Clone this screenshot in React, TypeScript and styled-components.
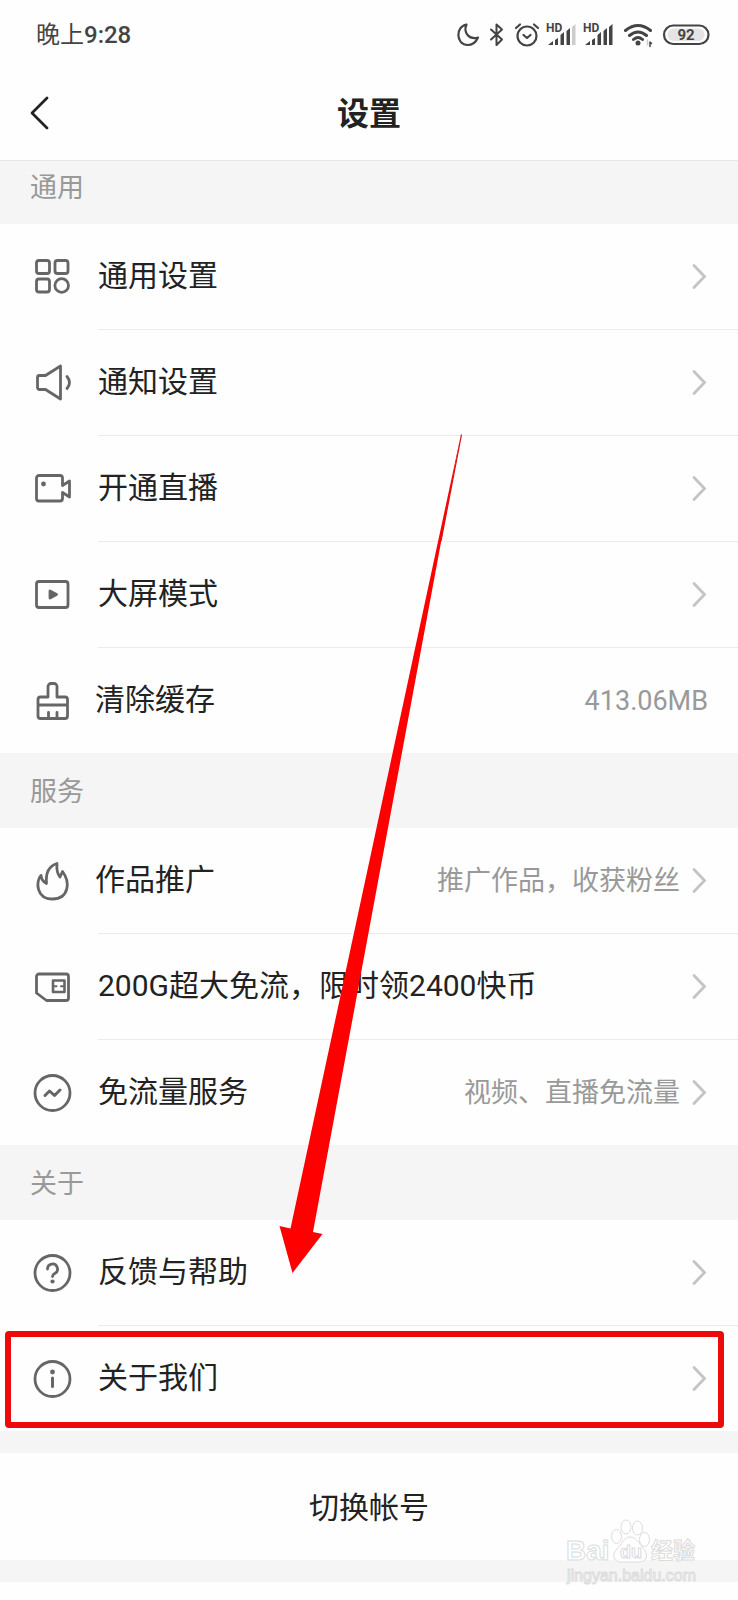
import React from "react";
import styled, { createGlobalStyle } from "styled-components";

const GlobalStyle = createGlobalStyle`
  * { box-sizing: border-box; }
  body {
    margin: 0;
    background: #fefefe;
    color: #222;
    font-family: Roboto, "Noto Sans CJK SC", sans-serif;
  }
  button { font: inherit; color: inherit; background: none; border: 0; padding: 0; cursor: pointer; }
  svg { display: block; flex: none; }
`;

const Page = styled.div`
  position: relative;
  overflow: hidden;
  min-height: 100vh;
`;

const StatusBar = styled.div`
  display: flex;
  align-items: center;
  justify-content: space-between;
  height: 72px;
  padding: 0 28px 2px 36px;
  color: #444;
  font-size: 24px;
  line-height: 32px;
  font-weight: 500;
`;

const DayPart = styled.span`
  font-weight: 400;
`;

const TitleBar = styled.header`
  display: grid;
  grid-template-columns: 48px 1fr 48px;
  align-items: center;
  height: 89px;
  padding: 0 24px 6px;
  border-bottom: 1px solid #e6e6e6;
`;

const BackButton = styled.button`
  display: flex;
  align-items: center;
  height: 48px;
`;

const Title = styled.h1`
  margin: 0;
  padding-top: 2px;
  text-align: center;
  font-size: 32px;
  line-height: 40px;
  font-weight: 700;
`;

const SectionTitle = styled.h2<{ $compact?: boolean }>`
  margin: 0;
  height: ${(p) => (p.$compact ? 63 : 75)}px;
  padding: ${(p) => (p.$compact ? 9 : 21)}px 30px 0;
  background: #f5f5f5;
  color: #999;
  font-size: 27px;
  line-height: 36px;
  font-weight: 400;
`;

const List = styled.ul`
  margin: 0;
  padding: 0;
  list-style: none;
`;

const Item = styled.li<{ $marked?: boolean }>`
  position: relative;
  ${(p) =>
    p.$marked &&
    `&::after {
      content: "";
      position: absolute;
      inset: 5px 14px 3px 5px;
      border: 6px solid #ee0a0a;
      border-radius: 4px;
      pointer-events: none;
    }`}
`;

const RowButton = styled.button<{ $last: boolean }>`
  display: flex;
  width: 100%;
  height: ${(p) => (p.$last ? 105 : 106)}px;
  padding-left: 32px;
  text-align: left;
`;

const RowIcon = styled.span`
  display: flex;
  align-items: center;
  width: 40px;
`;

const RowBody = styled.span<{ $last: boolean; $tight: boolean }>`
  display: flex;
  flex: 1;
  align-items: center;
  margin-left: 26px;
  padding-right: 30px;
  border-bottom: ${(p) => (p.$last ? 0 : 1)}px solid #ebebeb;
  text-indent: ${(p) => (p.$tight ? -3 : 0)}px;
`;

const Label = styled.span`
  flex: 1;
  font-size: 30px;
  line-height: 40px;
  padding-bottom: 2px;
  white-space: nowrap;
`;

const Value = styled.span`
  color: #999;
  font-size: 27px;
  line-height: 40px;
  white-space: nowrap;
  text-indent: 0;
`;

const Chevron = styled.svg`
  margin-left: 12px;
`;

const Gap = styled.div`
  height: 22px;
  background: #f5f5f5;
`;

const SwitchButton = styled.button`
  display: block;
  width: 100%;
  height: 107px;
  padding-bottom: 4px;
  font-size: 30px;
`;

const ArrowMark = styled.svg`
  position: absolute;
  top: 434px;
  left: 278px;
  pointer-events: none;
`;

const Watermark = styled.div`
  position: absolute;
  top: 1519px;
  right: 34px;
  width: 140px;
  pointer-events: none;
`;

const line = {
  fill: "none",
  stroke: "#666",
  strokeWidth: 2.8,
  strokeLinecap: "round" as const,
  strokeLinejoin: "round" as const,
};

const Icon = ({ children }: { children: React.ReactNode }) => (
  <svg width="40" height="40" viewBox="0 0 40 40" aria-hidden="true" {...line}>
    {children}
  </svg>
);

const icons = {
  grid: (
    <Icon>
      <rect x="4.5" y="3.500" width="13" height="13" rx="2.5" />
      <rect x="23" y="3.500" width="13" height="13" rx="2.5" />
      <rect x="4.5" y="22" width="13" height="13" rx="2.5" />
      <circle cx="29.700" cy="28.500" r="6.8" />
    </Icon>
  ),
  sound: (
    <Icon>
      <path d="M7.500 12.500H13.500L28.500 3v33L13.500 26.500H7.500a2 2 0 0 1-2-2v-10a2 2 0 0 1 2-2z" />
      <path d="M35 13.500q5 6 0 12" />
    </Icon>
  ),
  camera: (
    <Icon>
      <path d="M30.500 16.500l7-4.500v16L30.500 23.500v6a2.500 2.500 0 0 1-2.500 2.500H7A2.500 2.500 0 0 1 4.500 29.500V9A2.500 2.500 0 0 1 7 6.500h21A2.500 2.500 0 0 1 30.500 9z" />
      <circle cx="11.500" cy="15" r="2.400" fill="#666" stroke="none" />
    </Icon>
  ),
  play: (
    <Icon>
      <rect x="4.500" y="6.500" width="31.500" height="26" rx="2.500" />
      <path d="M18 16v7l6.500-3.500z" fill="#666" />
    </Icon>
  ),
  brush: (
    <Icon>
      <path d="M16 16V5.500a3 3 0 0 1 3-3h3a3 3 0 0 1 3 3V16h8a2.500 2.500 0 0 1 2.500 2.500V35a2.500 2.500 0 0 1-2.500 2.500H8.500A2.500 2.500 0 0 1 6 35V18.500A2.500 2.500 0 0 1 8.500 16zM6 24h29.500M16.500 31.500V37M25 31.500V37" />
    </Icon>
  ),
  flame: (
    <Icon>
      <path d="M9 14.500C3.500 20 4 38 20.500 38C37 38 38.500 21 30.500 10.500L28 16C25 12.500 24.500 8 25 2.500C17 5 13.500 12 14.500 22.500C11.500 21 9.500 18.500 9 14.500z" />
    </Icon>
  ),
  sim: (
    <Icon>
      <path d="M7 7h27a2.500 2.500 0 0 1 2.500 2.500V31a2.500 2.500 0 0 1-2.500 2.500H14.500L4.500 26V9.500A2.500 2.500 0 0 1 7 7z" />
      <path d="M21 13.500h11.500v11.500H21z" strokeWidth="2.600" />
      <path d="M22.500 19.300h2M29 19.300h2" strokeWidth="2" />
    </Icon>
  ),
  pulse: (
    <Icon>
      <circle cx="20.500" cy="20" r="17.500" />
      <path d="M13 22.500l4.500-4.500 5 4.500 5.500-5.500" strokeWidth="3" />
    </Icon>
  ),
  help: (
    <Icon>
      <circle cx="20.500" cy="20" r="17.500" />
      <path d="M15.500 16a5 5 0 1 1 7.500 4.300q-2.500 1.500-2.500 3.200" />
      <circle cx="20.500" cy="28.500" r="2.100" fill="#666" stroke="none" />
    </Icon>
  ),
  info: (
    <Icon>
      <circle cx="20.500" cy="20" r="17.500" />
      <path d="M20.500 19v8.500" strokeWidth="3" />
      <circle cx="20.500" cy="13" r="2.400" fill="#666" stroke="none" />
    </Icon>
  ),
};

type Row = { icon: keyof typeof icons; label: string; value?: string; arrow?: boolean; tight?: boolean; marked?: boolean };

const sections: { title: string; rows: Row[] }[] = [
  {
    title: "通用",
    rows: [
      { icon: "grid", label: "通用设置" },
      { icon: "sound", label: "通知设置" },
      { icon: "camera", label: "开通直播" },
      { icon: "play", label: "大屏模式" },
      { icon: "brush", label: "清除缓存", value: "413.06MB", arrow: false, tight: true },
    ],
  },
  {
    title: "服务",
    rows: [
      { icon: "flame", label: "作品推广", value: "推广作品，收获粉丝", tight: true },
      { icon: "sim", label: "200G超大免流，限时领2400快币" },
      { icon: "pulse", label: "免流量服务", value: "视频、直播免流量" },
    ],
  },
  {
    title: "关于",
    rows: [
      { icon: "help", label: "反馈与帮助" },
      { icon: "info", label: "关于我们", marked: true },
    ],
  },
];

const StatusGlyphs = () => (
  <svg width="262" height="28" viewBox="448 21 262 28" role="img" aria-label="状态图标" fill="none" stroke="#444" strokeWidth="2.200" strokeLinecap="round" strokeLinejoin="round">
    <path d="M466.500 24.500c-11 2-11 20 1 20.500c5 0 8.500-3 10.500-7.500c-9 2.500-15-5-11.500-13z" />
    <path d="M491 29.500l11 10-5.500 5.500V24.500l5.500 5-11 10" strokeWidth="2" />
    <circle cx="527" cy="36" r="9.500" />
    <path d="M523.500 35l3.500 3 3.500-3M516 28l4-3.500M538 28l-4-3.500" />
    <g fontFamily="Roboto, sans-serif" fontWeight="700" fontSize="12" fill="#444" stroke="none">
      <text x="546" y="32">HD</text>
      <text x="583" y="32">HD</text>
    </g>
    {[0, 37].map((dx) => (
      <g key={dx} fill="#444" stroke="none">
        <path d={`M${548 + dx} 45l5-4v4z`} />
        <path d={`M${555 + dx} 40l3-2v7h-3zM${560.5 + dx} 35l3.500-3v13h-3.500zM${566.5 + dx} 31l3.500-3v17h-3.500z`} />
        <path d={`M${572 + dx} 27l3.500-3v21H${572 + dx}z`} fill={dx ? "#444" : "#ccc"} />
      </g>
    ))}
    <path d="M625.500 30.500q12.500-10 25 0M629.500 35.500q8.500-7 17 0M633.500 39.500q4.500-4 9 0" strokeWidth="3" />
    <circle cx="638" cy="43" r="2.500" fill="#444" stroke="none" />
    <path d="M647.500 40v5" stroke="#ccc" strokeWidth="1.500" />
    <path d="M650 42v4.500M650 42l1.500 1.500" strokeWidth="1.500" />
    <rect x="664" y="25.500" width="44.500" height="18.500" rx="9.250" />
    <rect x="667.500" y="28.500" width="37" height="12.500" rx="6" fill="#e4e4e4" stroke="none" />
    <text x="686" y="40" textAnchor="middle" fontFamily="Roboto, sans-serif" fontWeight="700" fontSize="15" fill="#444" stroke="none">92</text>
  </svg>
);

const SettingsRow = ({ row, last }: { row: Row; last: boolean }) => (
  <Item $marked={row.marked}>
    <RowButton type="button" $last={last}>
      <RowIcon>{icons[row.icon]}</RowIcon>
      <RowBody $last={last} $tight={!!row.tight}>
        <Label>{row.label}</Label>
        {row.value && <Value>{row.value}</Value>}
        {row.arrow !== false && (
          <Chevron width="16" height="28" viewBox="0 0 16 28" aria-hidden="true" fill="none" stroke="#c4c4c4" strokeWidth="2.800" strokeLinecap="round">
            <path d="M2 2.500L12.500 13.500 2 24.500" />
          </Chevron>
        )}
      </RowBody>
    </RowButton>
  </Item>
);

export default function App() {
  return (
    <Page>
      <GlobalStyle />
      <StatusBar>
        <span>
          <DayPart>晚上</DayPart>9:28
        </span>
        <StatusGlyphs />
      </StatusBar>
      <TitleBar>
        <BackButton type="button" aria-label="返回">
          <svg width="28" height="36" viewBox="0 0 28 36" fill="none" stroke="#222" strokeWidth="2.800" strokeLinecap="round" strokeLinejoin="round">
            <path d="M23 3L8 18l15 15" />
          </svg>
        </BackButton>
        <Title>设置</Title>
      </TitleBar>
      <main>
        {sections.map((s, i) => (
          <section key={s.title}>
            <SectionTitle $compact={i === 0}>{s.title}</SectionTitle>
            <List>
              {s.rows.map((r, j) => (
                <SettingsRow key={r.label} row={r} last={j === s.rows.length - 1} />
              ))}
            </List>
          </section>
        ))}
        <Gap />
        <SwitchButton type="button">切换帐号</SwitchButton>
        <Gap />
      </main>
      <ArrowMark width="186" height="840" viewBox="278 434 186 840" aria-hidden="true">
        <path d="M461 434.500L313 1232l9.500 2L292.500 1273 279.500 1226l11 2.500z" fill="#fe0000" />
        <path d="M461.500 434.500L441 541" stroke="#d81010" strokeWidth="1.200" />
      </ArrowMark>
      <Watermark>
        <svg width="140" height="66" viewBox="564 1519 140 66" role="img" aria-label="Baidu 经验" fill="#fff" stroke="#dcdcdc" strokeWidth="1">
          <ellipse cx="616.500" cy="1536.500" rx="5" ry="7" />
          <ellipse cx="626" cy="1527" rx="5" ry="7" />
          <ellipse cx="637.500" cy="1528" rx="5" ry="7" />
          <ellipse cx="644.500" cy="1539.500" rx="5" ry="7" />
          <path d="M630 1537c-7 0-8 8-13 12c-6 6-3 13 4 13h18c8 0 10-8 4-14c-4-4-6-11-13-11z" />
          <g fontFamily="Liberation Sans, sans-serif" fontWeight="700">
            <text x="566" y="1560" fontSize="28">Bai</text>
            <text x="620" y="1558" fontSize="18">du</text>
            <text x="651" y="1558" fontSize="22" fontFamily="Noto Sans CJK SC, sans-serif">经验</text>
          </g>
          <text x="567" y="1581" fontSize="16" fontFamily="Liberation Sans, sans-serif">jingyan.baidu.com</text>
        </svg>
      </Watermark>
    </Page>
  );
}
